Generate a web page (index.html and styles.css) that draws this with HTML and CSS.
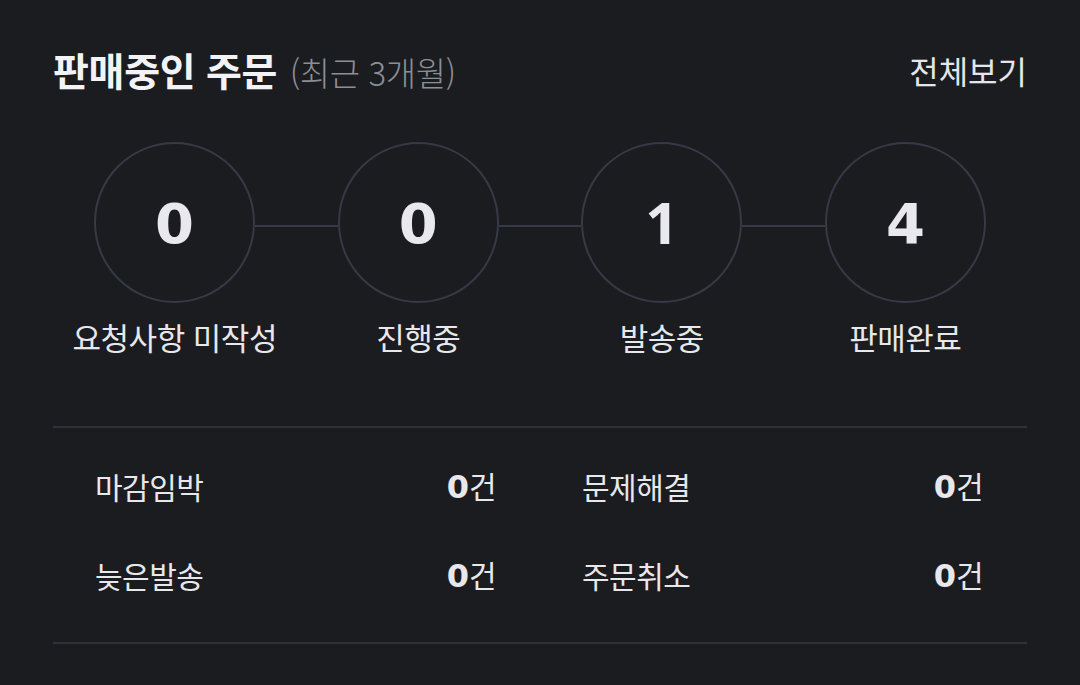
FILE: index.html
```html
<!DOCTYPE html>
<html lang="ko">
<head>
<meta charset="utf-8">
<title>판매중인 주문</title>
<link rel="stylesheet" href="styles.css">
</head>
<body>
<main class="panel">
  <header class="head">
    <h1 class="title">판매중인 주문 <span class="sub">(최근 3개월)</span></h1>
    <a class="more" href="#">전체보기</a>
  </header>

  <section class="steps">
    <div class="track">
      <div class="circle">0</div>
      <div class="connector"></div>
      <div class="circle">0</div>
      <div class="connector"></div>
      <div class="circle circle-one">1</div>
      <div class="connector"></div>
      <div class="circle">4</div>
    </div>
    <div class="labels">
      <span>요청사항 미작성</span>
      <span>진행중</span>
      <span>발송중</span>
      <span>판매완료</span>
    </div>
  </section>

  <section class="stats">
    <div class="stat"><span class="name">마감임박</span><span class="count"><b>0</b>건</span></div>
    <div class="stat"><span class="name">문제해결</span><span class="count"><b>0</b>건</span></div>
    <div class="stat"><span class="name">늦은발송</span><span class="count"><b>0</b>건</span></div>
    <div class="stat"><span class="name">주문취소</span><span class="count"><b>0</b>건</span></div>
  </section>
</main>
</body>
</html>
```

FILE: styles.css
```css
* { box-sizing: border-box; }
html, body {
  margin: 0;
  padding: 0;
  background: #1b1c1f;
}
body {
  font-family: "Noto Sans CJK KR", "Noto Sans", sans-serif;
  color: #e8e8ec;
  width: 1080px;
  height: 685px;
  overflow: hidden;
}
.panel {
  padding: 42px 53px 0 53px;
}
.head {
  display: flex;
  justify-content: space-between;
  align-items: center;
  height: 56px;
}
.title {
  margin: 0;
  font-size: 39px;
  font-weight: 700;
  color: #f3f3f6;
  letter-spacing: -0.3px;
  line-height: 56px;
  white-space: nowrap;
}
.sub {
  font-size: 33px;
  font-weight: 300;
  color: #8d8e96;
  margin-left: 2px;
  letter-spacing: -0.4px;
}
.more {
  font-size: 32px;
  color: #e6e6ea;
  text-decoration: none;
  line-height: 56px;
  letter-spacing: 0;
}
.steps {
  padding-top: 44px;
}
.track {
  display: flex;
  align-items: center;
  padding: 0 41px 0 41px;
}
.circle {
  width: 161px;
  height: 161px;
  border: 2px solid #363946;
  border-radius: 50%;
  display: flex;
  align-items: center;
  justify-content: center;
  font-family: "DejaVu Sans", sans-serif;
  font-size: 56px;
  font-weight: 700;
  color: #e8e8ee;
  flex: none;
  line-height: 1;
  padding-top: 2px;
}
.circle-one {
  font-family: "Noto Sans", sans-serif;
  font-size: 58px;
  padding-top: 0;
  padding-bottom: 2px;
}
.connector {
  flex: 1;
  height: 2px;
  background: #363946;
  margin-top: 7px;
}
.labels {
  display: grid;
  grid-template-columns: repeat(4, 1fr);
  text-align: center;
  font-size: 31px;
  line-height: 40px;
  margin-top: 14px;
  letter-spacing: -0.5px;
}
.stats {
  margin-top: 69px;
  border-top: 2px solid #2f3039;
  border-bottom: 2px solid #2f3039;
  display: grid;
  grid-template-columns: 1fr 1fr;
  padding: 37px 0 46px;
  row-gap: 47px;
}
.stat {
  display: flex;
  justify-content: space-between;
  align-items: center;
  padding: 0 44px 0 42px;
  font-size: 30px;
  line-height: 40px;
  letter-spacing: -0.5px;
}
.count b {
  font-family: "DejaVu Sans", sans-serif;
  font-size: 32px;
  font-weight: 700;
  letter-spacing: 0;
}
```
